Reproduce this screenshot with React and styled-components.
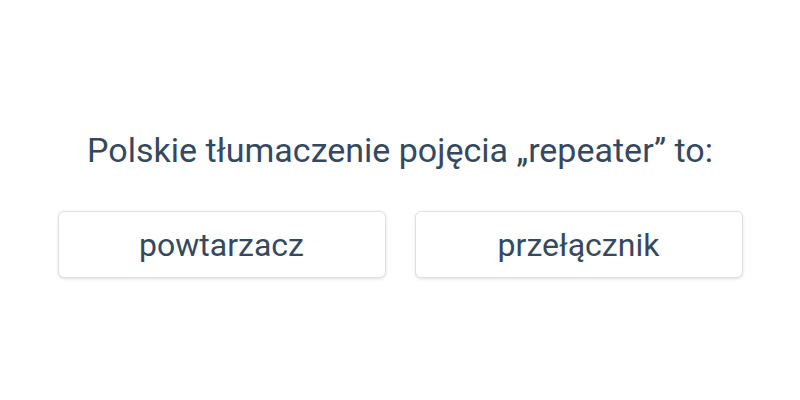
import React from "react";
import styled, { createGlobalStyle } from "styled-components";

const Global = createGlobalStyle`
  html, body { margin: 0; padding: 0; background: #fff; }
  body { font-family: Roboto, "Noto Sans", sans-serif; color: #35495e; }
`;

const Page = styled.div`
  width: 800px;
  height: 400px;
  box-sizing: border-box;
  padding-top: 8px;
  display: flex;
  flex-direction: column;
  align-items: center;
  justify-content: center;
`;

const Question = styled.h1`
  margin: 0 0 41px;
  font-size: 34px;
  font-weight: 400;
  line-height: 40px;
  color: #35495e;
  text-align: center;
`;

const Answers = styled.div`
  display: grid;
  grid-template-columns: 328px 328px;
  gap: 29px;
`;

const Answer = styled.button`
  height: 67px;
  border: 1px solid #e0e0e0;
  border-radius: 6px;
  background: #fff;
  box-shadow: 0 1px 3px rgba(0, 0, 0, 0.12);
  font-family: Roboto, "Noto Sans", sans-serif;
  font-size: 32px;
  color: #35495e;
  cursor: pointer;
  padding: 0;
`;

export default function App() {
  return (
    <>
      <Global />
      <Page>
        <Question>Polskie tłumaczenie pojęcia „repeater” to:</Question>
        <Answers>
          <Answer>powtarzacz</Answer>
          <Answer>przełącznik</Answer>
        </Answers>
      </Page>
    </>
  );
}
